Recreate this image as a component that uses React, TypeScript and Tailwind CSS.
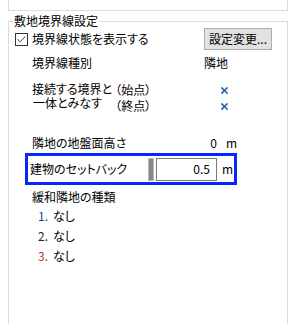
import { Check } from 'lucide-react';

const font = "font-['Noto_Sans_CJK_JP',sans-serif] [font-feature-settings:'palt']";

function Cross() {
  return (
    <svg width="7" height="7" viewBox="0 0 7 7" className="block">
      <path d="M1 1 L6 6 M6 1 L1 6" stroke="#1f5fb0" strokeWidth="1.6" strokeLinecap="square" />
    </svg>
  );
}

const items = [
  { n: '1.', color: 'text-[#26408f]' },
  { n: '2.', color: 'text-[#222222]' },
  { n: '3.', color: 'text-[#b03a2a]' },
];

export default function App() {
  return (
    <div className={`w-[297px] h-[324px] bg-white overflow-hidden text-black text-[12px] ${font}`}>
      {/* bottom of the panel above */}
      <div className="ml-[8px] w-[280px] h-[11px] border-x border-b border-[#dcdcdc]" />

      {/* group box */}
      <div className="relative mt-[10px] ml-[8px] w-[280px] h-[320px] border border-[#dcdcdc]">
        <span className="absolute -top-[8px] left-[4px] bg-white px-[1px] leading-[14px]">
          敷地境界線設定
        </span>

        {/* checkbox + button */}
        <div className="mt-[6px] h-[22px] flex items-center">
          <div className="ml-[6px] w-[13px] h-[13px] border border-[#333333] bg-white flex items-center justify-center">
            <Check className="w-[11px] h-[11px] text-[#333333]" strokeWidth={2} />
          </div>
          <span className="ml-[4px] leading-[14px]">境界線状態を表示する</span>
          <button className="ml-auto mr-[15px] w-[68px] h-[22px] bg-[#e1e1e1] border border-[#adadad] leading-[14px] flex items-center justify-center">
            設定変更...
          </button>
        </div>

        {/* table header */}
        <div className="mt-[6px] h-[14px] flex items-center pl-[23px] leading-[14px]">
          <span className="w-[172px]">境界線種別</span>
          <span>隣地</span>
        </div>

        {/* connected boundary */}
        <div className="mt-[12px] flex pl-[23px]">
          <div className="leading-[14px] whitespace-nowrap">
            <div>接続する境界と</div>
            <div className="pl-[1px]">一体とみなす</div>
          </div>
          <div className="ml-[3px] flex-1 flex flex-col">
            <div className="h-[16px] flex items-center">
              <span className="leading-[14px]">（始点）</span>
              <span className="ml-auto mr-[59px]"><Cross /></span>
            </div>
            <div className="h-[16px] flex items-center">
              <span className="leading-[14px]">（終点）</span>
              <span className="ml-auto mr-[59px]"><Cross /></span>
            </div>
          </div>
        </div>

        {/* ground height */}
        <div className="mt-[22px] h-[14px] flex items-center pl-[23px] leading-[14px]">
          <span className="w-[175px]">隣地の地盤面高さ</span>
          <span className="w-[10px] text-right">0</span>
          <span className="ml-[9px]">m</span>
        </div>

        {/* setback (focused row) */}
        <div className="mt-[3px] ml-[16px] w-[212px] h-[32px] border-[3px] border-[#0526ff] flex items-center">
          <span className="w-[120px] pl-[2px] leading-[14px]">建物のセットバック</span>
          <div className="w-[6px] h-[23px] bg-[#878787] border border-[#b9b9b9]" />
          <div className="ml-[2px] w-[61px] h-[23px] border border-[#7a7a7a] flex items-center justify-end pr-[6px] leading-[14px]">
            0.5
          </div>
          <span className="ml-[5px] leading-[14px]">m</span>
        </div>

        {/* relaxed neighbor types */}
        <div className="mt-[5px] h-[14px] flex items-center pl-[23px] leading-[14px]">
          緩和隣地の種類
        </div>
        <div className="mt-[2px] flex flex-col">
          {items.map((it) => (
            <div key={it.n} className="h-[20px] flex items-center pl-[29px] leading-[14px]">
              <span className={`w-[15px] ${it.color}`}>{it.n}</span>
              <span>なし</span>
            </div>
          ))}
        </div>
      </div>
    </div>
  );
}
